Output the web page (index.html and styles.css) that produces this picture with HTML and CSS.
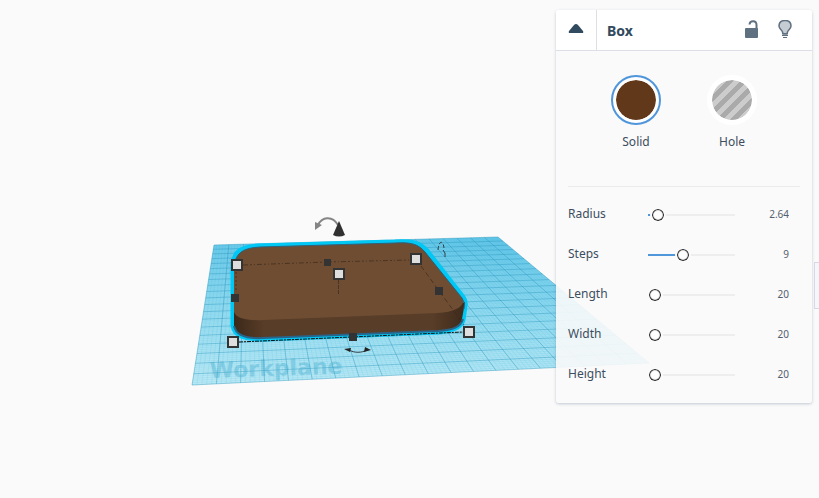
FILE: index.html
```html
<!DOCTYPE html>
<html lang="en">
<head>
<meta charset="utf-8">
<meta name="viewport" content="width=device-width, initial-scale=1">
<title>Box</title>
<link rel="stylesheet" href="styles.css">
</head>
<body>
<main class="editor">
  <svg class="scene" viewBox="0 0 819 498" preserveAspectRatio="xMinYMin slice" role="img" aria-label="Workplane with a box">
    <defs>
      <linearGradient id="plane" x1="0.55" y1="0" x2="0.45" y2="1">
        <stop offset="0" stop-color="#6bcbec"/>
        <stop offset="0.5" stop-color="#95dcf1"/>
        <stop offset="1" stop-color="#b8e8f5"/>
      </linearGradient>
      <linearGradient id="side" x1="0" x2="1" y1="0" y2="0">
        <stop offset="0" stop-color="#3b281a"/>
        <stop offset="0.13" stop-color="#583d28"/>
        <stop offset="0.86" stop-color="#583d28"/>
        <stop offset="1" stop-color="#3e2a1b"/>
      </linearGradient>
    </defs>
    <polygon points="214,245 498,237 649,363 192,385" fill="url(#plane)"/>
    <path id="fine" class="grid-fine"/>
    <path id="major" class="grid-major"/>
    <text class="plane-name" x="210" y="378" transform="rotate(-2 210 378)">Workplane</text>

    <path d="M233 312 V265 C234 251 242 247 258 246 L395 242 C412 241 420 243 427 251 L463 297 Q466 301 465 306 L463 320 C461 328 452 331 438 332 L263 339 C245 339 235 336 233 326 Z" fill="#65472e" stroke="#00c8f5" stroke-width="5" stroke-linejoin="round"/>
    <path d="M234 308 V326 C236 335 246 339 263 338 L438 331 C453 330 461 327 462 319 L465 302 L440 310 L262 318 Z" fill="url(#side)"/>
    <path d="M234 312 V266 C236 252 244 248 260 247 L395 243 C411 242 418 244 425 252 L462 298 C467 305 456 312 438 313 L264 320 C246 321 236 318 234 312 Z" fill="#6f4d32"/>
    <path d="M234 266 C236 252 244 248 260 247 L395 243 C411 242 418 244 425 252 L462 298 Q466 303 464 309" fill="none" stroke="#316078" stroke-width="1"/>
    <path d="M234 326 C236 335 246 339 263 338 L438 331 C453 330 461 327 463 319" fill="none" stroke="#29658b" stroke-width="2"/>

    <g fill="none" stroke="#3c2a1c" stroke-opacity="0.7" stroke-width="1">
      <path d="M243 265 L327 262 L410 260" stroke-dasharray="5 2 2 2 1 2"/>
      <path d="M236 272 V292" stroke-dasharray="2 2"/>
      <path d="M338.500 280 V295" stroke-dasharray="4 1"/>
      <path d="M421 266 L464 325" stroke-dasharray="5 3"/>
    </g>
    <path d="M239 342 L463 332" fill="none" stroke="#111" stroke-width="1" stroke-dasharray="4 1 2 1"/>

    <g fill="#dedede" stroke="#333" stroke-width="2">
      <rect x="232" y="260" width="10" height="10"/>
      <rect x="411" y="254" width="10" height="10"/>
      <rect x="334" y="269" width="10" height="10"/>
      <rect x="228" y="337" width="10" height="10"/>
      <rect x="464" y="327" width="10" height="10"/>
    </g>
    <g fill="#333">
      <rect x="324" y="259" width="7" height="7"/>
      <rect x="231" y="294" width="8" height="8"/>
      <rect x="435" y="287" width="8" height="8"/>
      <rect x="349" y="333" width="8" height="8"/>
    </g>

    <path d="M318 225 C322 217 332 215 338 225" fill="none" stroke="#858585" stroke-width="2"/>
    <path d="M315 222 L322 225 L315 230 Z" fill="#858585"/>
    <path d="M339 221 L345 235 Q339 238 333 235 Z" fill="#303030"/>
    <g fill="none" stroke="#333f44">
      <path d="M349 350 C354 353 362 353 367 350"/>
      <path d="M438 250 C439 240 443 240 444 248" stroke-dasharray="4 2"/>
      <path d="M443 250 L445 253 V257"/>
    </g>
    <path d="M344 349 L351 348 L350 352 Z M365 347 L371 350 L364 352 Z" fill="#222"/>
  </svg>

  <section class="panel" aria-label="Shape properties">
    <header class="panel-head">
      <button class="collapse" type="button" aria-label="Collapse">
        <svg width="16" height="10" viewBox="0 0 16 10"><path d="M8 0 Q9 0 10 1 L15 7 Q16 9 14 9 H2 Q0 9 1 7 L6 1 Q7 0 8 0 Z" fill="#314a5e"/></svg>
      </button>
      <h1 class="title">Box</h1>
      <button class="tool" type="button" aria-label="Lock">
        <svg width="14" height="20" viewBox="0 0 14 20"><rect x="1" y="8" width="13" height="10" rx="1" fill="#5f7181"/><path d="M5.500 4.500 C6 0 12.500 0 12.500 5 V10" fill="none" stroke="#5f7181" stroke-width="2"/></svg>
      </button>
      <button class="tool" type="button" aria-label="Show or hide">
        <svg width="14" height="20" viewBox="0 0 14 20"><path d="M4.500 12 C4 10 1 9 1 6 C1 2 4 0.500 7 0.500 C10 0.500 13 2 13 6 C13 9 10 10 9.500 12 L9 14 H5 Z" fill="#c5cdd2" stroke="#5f7181" stroke-width="1.500"/><path d="M4 13.500 H10 M4 15.500 H10 M5 17.500 H9" stroke="#5f7181" stroke-width="1.200"/></svg>
      </button>
    </header>

    <fieldset class="kinds">
      <label class="kind"><input class="swatch solid" type="radio" name="kind" checked><span>Solid</span></label>
      <label class="kind"><input class="swatch hole" type="radio" name="kind"><span>Hole</span></label>
    </fieldset>

    <div class="params">
      <div class="param">
        <label for="radius">Radius</label>
        <input class="range" id="radius" type="range" min="0" max="64" step="0.01" value="2.64">
        <input class="value" type="text" value="2.64" aria-label="Radius value">
      </div>
      <div class="param">
        <label for="steps">Steps</label>
        <input class="range" id="steps" type="range" min="1" max="22" value="9">
        <input class="value" type="text" value="9" aria-label="Steps value">
      </div>
      <div class="param">
        <label for="length">Length</label>
        <input class="range" id="length" type="range" min="20" max="200" value="20">
        <input class="value" type="text" value="20" aria-label="Length value">
      </div>
      <div class="param">
        <label for="width">Width</label>
        <input class="range" id="width" type="range" min="20" max="200" value="20">
        <input class="value" type="text" value="20" aria-label="Width value">
      </div>
      <div class="param">
        <label for="height">Height</label>
        <input class="range" id="height" type="range" min="20" max="200" value="20">
        <input class="value" type="text" value="20" aria-label="Height value">
      </div>
    </div>
  </section>

  <button class="drawer" type="button" aria-label="Shapes drawer"></button>
</main>
<script src="main.js"></script>
</body>
</html>
```
FILE: styles.css
```css
* {
  box-sizing: border-box;
}

body {
  margin: 0;
  background: #fafafa;
  color: #3c4e5e;
  font-family: "Noto Sans", "Open Sans", sans-serif;
  font-size: 12px;
  line-height: 16px;
}

button {
  border: 0;
  padding: 0;
  background: none;
}

.editor {
  position: relative;
  min-height: 100vh;
  overflow: hidden;
}

.scene {
  position: absolute;
  inset: 0;
  width: 100%;
  height: 100%;
}

.grid-fine {
  fill: none;
  stroke: #2aa7d0;
  stroke-width: 1px;
  stroke-opacity: 0.1;
}

.grid-major {
  fill: none;
  stroke: #208fb8;
  stroke-width: 1px;
  stroke-opacity: 0.35;
}

.plane-name {
  font-family: "DejaVu Sans", sans-serif;
  font-size: 22px;
  font-weight: bold;
  fill: #3ea9cc;
  fill-opacity: 0.4;
}

.panel {
  position: absolute;
  top: 10px;
  right: 7px;
  width: 256px;
  border-radius: 3px;
  background: rgba(250, 250, 250, 0.9);
  box-shadow: 0 1px 3px rgba(60, 80, 120, 0.3);
}

.panel-head {
  display: flex;
  align-items: center;
  height: 41px;
  padding-right: 20px;
  border-bottom: 1px solid #dcdfe8;
  border-radius: 3px 3px 0 0;
  background: #fff;
}

.collapse {
  display: grid;
  place-items: center;
  align-self: stretch;
  width: 41px;
  padding-bottom: 3px;
  border-right: 1px solid #dcdfe8;
}

.title {
  flex: 1;
  margin: 0 0 0 10px;
  padding-top: 1px;
  color: #314a5e;
  font-size: 14px;
  line-height: 20px;
}

.tool {
  display: grid;
  width: 14px;
  margin-left: 20px;
}

.kinds {
  display: flex;
  justify-content: center;
  gap: 46px;
  height: 136px;
  margin: 0 12px;
  padding: 24px 0 0;
  border: 0;
  border-bottom: 1px solid #ebebeb;
}

.kind {
  display: flex;
  flex-direction: column;
  align-items: center;
  gap: 9px;
  width: 50px;
}

.swatch {
  appearance: none;
  width: 50px;
  height: 50px;
  margin: 0;
  padding: 3px;
  border: 2px solid #fff;
  border-radius: 50%;
  background-color: #fff;
  background-clip: content-box;
  box-shadow: inset 0 0 0 3px #fff;
}

.swatch:checked {
  border-color: #5096db;
}

.solid {
  background-color: #62381b;
}

.hole {
  background-image: repeating-linear-gradient(135deg, #ccc 0 5px, #aaa 5px 10px);
}

.params {
  padding: 7px 12px 9px;
}

.param {
  display: grid;
  grid-template-columns: 80px 87px 1fr;
  align-items: center;
  height: 40px;
  padding-right: 11px;
}

.range {
  appearance: none;
  width: 100%;
  height: 16px;
  margin: 2px 0 0;
  background: linear-gradient(#5096db, #5096db) left center / var(--fill, 0) 2px no-repeat,
    linear-gradient(#eee, #eee) center / 100% 2px no-repeat;
}

.range::-webkit-slider-thumb {
  appearance: none;
  width: 14px;
  height: 14px;
  border: 1px solid #fafafa;
  border-radius: 50%;
  background: #fff;
  box-shadow: inset 0 0 1px 1px #000, 0 0 0 1px #fafafa;
}

.value {
  width: 100%;
  padding: 0;
  border: 0;
  background: none;
  color: #52616f;
  font: inherit;
  font-size: 10px;
  text-align: right;
}

.drawer {
  position: absolute;
  top: 262px;
  right: 0;
  width: 5px;
  height: 47px;
  border: 1px solid #d6d9e5;
  border-right: 0;
  background: #f5f6fa;
}
```
FILE: main.js
```js
// Perspective projection of the unit square onto the workplane's corners.
const [p0, p1, p2, p3] = [[214, 245], [498, 237], [649, 363], [192, 385]];
const sx = p0[0] - p1[0] + p2[0] - p3[0];
const sy = p0[1] - p1[1] + p2[1] - p3[1];
const dx1 = p1[0] - p2[0], dx2 = p3[0] - p2[0];
const dy1 = p1[1] - p2[1], dy2 = p3[1] - p2[1];
const det = dx1 * dy2 - dx2 * dy1;
const g = (sx * dy2 - dx2 * sy) / det;
const h = (dx1 * sy - sx * dy1) / det;

function project(u, v) {
  const w = g * u + h * v + 1;
  const x = (p1[0] - p0[0] + g * p1[0]) * u + (p3[0] - p0[0] + h * p3[0]) * v + p0[0];
  const y = (p1[1] - p0[1] + g * p1[1]) * u + (p3[1] - p0[1] + h * p3[1]) * v + p0[1];
  return (x / w).toFixed(1) + " " + (y / w).toFixed(1);
}

function grid(count) {
  let d = "";
  for (let i = 0; i <= count; i++) {
    const t = i / count;
    d += `M${project(t, 0)}L${project(t, 1)}M${project(0, t)}L${project(1, t)}`;
  }
  return d;
}

document.getElementById("fine").setAttribute("d", grid(100));
document.getElementById("major").setAttribute("d", grid(20));

// Coloured part of each slider track, up to the thumb.
function paint(range) {
  const part = (range.value - range.min) / (range.max - range.min);
  range.style.setProperty("--fill", part * 100 + "%");
}

document.querySelectorAll(".range").forEach((range) => {
  paint(range);
  range.addEventListener("input", () => {
    paint(range);
    range.closest(".param").querySelector(".value").value = range.value;
  });
});
```
